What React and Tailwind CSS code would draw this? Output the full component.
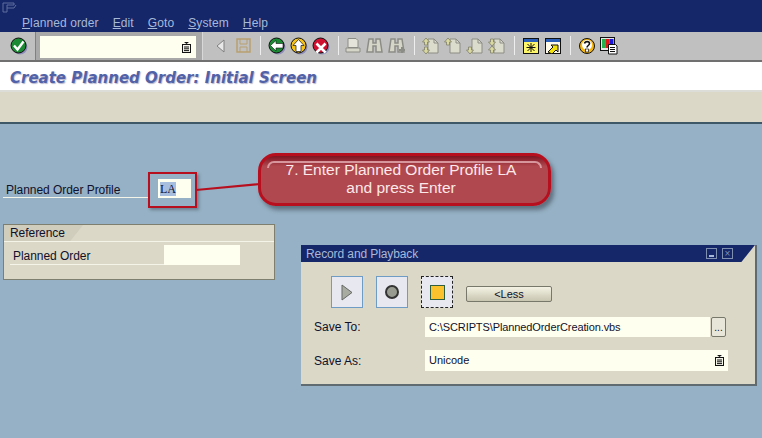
import React from 'react';

const MENU = [
  ['P', 'lanned order', 'ml-[22px]'],
  ['E', 'dit', 'ml-[14px]'],
  ['G', 'oto', 'ml-[14px]'],
  ['S', 'ystem', 'ml-[14px]'],
  ['H', 'elp', 'ml-[14px]'],
];

function Round({ fill, children }) {
  return (
    <svg width="18" height="18" viewBox="0 0 18 18">
      <circle cx="10" cy="10" r="7.5" fill="#8f8fb8" />
      <circle cx="8.5" cy="8.5" r="7.5" fill={fill} stroke="#101010" strokeWidth="1" />
      {children}
    </svg>
  );
}

const CheckIcon = () => (
  <Round fill="#1c8a35">
    <path d="M4 8.5l3.5 4L13.5 4.5" fill="none" stroke="#fff" strokeWidth="2.4" />
  </Round>
);
const BackIcon = () => (
  <Round fill="#1c8a35">
    <path d="M2.5 8.5L8 3.5v3h7v4.5H8v3z" fill="#fff" stroke="#111" strokeWidth="0.6" />
  </Round>
);
const UpIcon = () => (
  <Round fill="#f7c217">
    <path d="M8.5 2.5L14 8.5h-3v6H6v-6H3z" fill="#fff" stroke="#111" strokeWidth="0.7" />
  </Round>
);
const CancelIcon = () => (
  <Round fill="#cf1030">
    <path d="M4.5 6.5l9 9M13.5 6.5l-9 9" stroke="#fff" strokeWidth="2.6" />
  </Round>
);
const HelpIcon = () => (
  <svg width="18" height="18" viewBox="0 0 18 18">
    <circle cx="9" cy="9" r="7.5" fill="#f6b60f" stroke="#111" />
    <circle cx="9" cy="8" r="5" fill="#fff" />
    <path d="M6.5 6.5C7 4 11.5 4 11.5 6.5c0 2-2.5 2-2.5 4" fill="none" stroke="#111" strokeWidth="1.6" />
    <rect x="7.5" y="12" width="3" height="3" fill="#fff" stroke="#111" strokeWidth="0.7" />
  </svg>
);
const LayoutIcon = () => (
  <svg width="18" height="18" viewBox="0 0 18 18">
    <rect x="0.5" y="0.5" width="14" height="13" fill="#e8e8e8" stroke="#111" />
    <rect x="2" y="2" width="4" height="9" fill="#22b14c" />
    <rect x="6" y="2" width="3.5" height="9" fill="#e01818" />
    <rect x="9.5" y="2" width="4" height="9" fill="#1818d8" />
    <path d="M8.5 7.5h7l1.5 1.5v8h-8.5z" fill="#fff" stroke="#111" />
    <path d="M10 10.5h5M10 12.5h5M10 14.5h5" stroke="#111" />
  </svg>
);
const WinIcon = ({ children }) => (
  <svg width="16" height="16" viewBox="0 0 16 16">
    <rect x="0.5" y="0.5" width="15" height="15" fill="#fffbe8" stroke="#111" />
    <rect x="1" y="1" width="14" height="3" fill="#2c5fb8" />
    {children}
  </svg>
);
const NewSessionIcon = () => (
  <WinIcon>
    <rect x="1" y="4" width="14" height="11" fill="#fdf66a" />
    <path d="M8 5v9M3.5 9.5h9M4.5 6l7 7M11.5 6l-7 7" stroke="#111" />
  </WinIcon>
);
const ShortcutIcon = () => (
  <WinIcon>
    <path d="M3 14l5-5-2-2h7v7l-2-2-4 4z" fill="#f4e20e" stroke="#111" />
  </WinIcon>
);
const ValueHelp = () => (
  <svg width="9" height="11" viewBox="0 0 9 11">
    <path d="M2 0h5L4.5 2z" fill="#111" />
    <rect x="0.5" y="2.5" width="8" height="8" fill="#f4f4e8" stroke="#111" />
    <path d="M2 5h5M2 6.8h5M2 8.6h5" stroke="#111" />
  </svg>
);

// disabled toolbar glyphs share the same washed-out look
const Gray = ({ children }) => (
  <svg width="18" height="18" viewBox="0 0 18 18" fill="#d6d6c8" stroke="#8c8c86" strokeWidth="1">
    {children}
  </svg>
);
const PrintIcon = () => (
  <Gray>
    <path d="M4 1.5h8l2 2v7H4z" fill="#e4e4da" />
    <path d="M2 11h14v4H2z" />
  </Gray>
);
const FindIcon = ({ plus }) => (
  <Gray>
    <path d="M3 2h4v4h3V2h4l2 13h-6V9H7v6H1z" strokeWidth="1.5" />
    {plus && <path d="M11 13h6M14 10v6" stroke="#8c8c86" strokeWidth="2" />}
  </Gray>
);
const UP = (x, y) => `M${x} ${y}l3.5 4h-2v3h-3v-3h-2z`;
const DOWN = (x, y) => `M${x} ${y}l3.5 -4h-2v-3h-3v3h-2z`;
const PageIcon = ({ arrows }) => (
  <Gray>
    <path d="M6 2h6l4 4v10H6z" fill="#dcdccc" />
    <path d="M12 2v4h4" fill="none" />
    {arrows.map((d) => (
      <path key={d} d={d} fill="#d8d8a0" stroke="#80806a" strokeWidth="0.8" />
    ))}
  </Gray>
);

const Sep = ({ className }) => <div className={`w-px h-[19px] bg-[#eeeeee] shrink-0 ${className}`} />;
const Slot = ({ children }) => <div className="w-[22px] h-[20px] flex items-center justify-center shrink-0">{children}</div>;

function Toolbar() {
  return (
    <div className="h-[30px] flex bg-[#c0c0c0] border-b-[2px] border-[#707070]">
      <div className="w-[36px] flex items-center pl-[10px] border-r border-[#808080]">
        <CheckIcon />
      </div>
      <div className="w-[166px] bg-[#a8a8a8] pl-[4px] pr-[6px] py-[4px]">
        <div className="h-[22px] bg-[#fffff0] flex items-center justify-end pr-[5px]">
          <ValueHelp />
        </div>
      </div>
      <div className="flex items-center flex-1 border-l border-[#d8d8d8] pb-[1px]">
        <div className="ml-[7px]"><Slot>
          <svg width="10" height="14" viewBox="0 0 10 14"><path d="M8 1v12L1 7z" fill="#e8e8e8" stroke="#808080" /></svg>
        </Slot></div>
        <Slot>
          <svg width="15" height="15" viewBox="0 0 15 15" fill="none" stroke="#b8a070"><rect x="1" y="1" width="13" height="13" strokeWidth="1.5" /><path d="M4 1v5h7V1M4 14V9h7v5" /></svg>
        </Slot>
        <Sep className="ml-[6px] mr-[5px]" />
        <Slot><BackIcon /></Slot>
        <Slot><UpIcon /></Slot>
        <Slot><CancelIcon /></Slot>
        <Sep className="ml-[6px] mr-[3px]" />
        <Slot><PrintIcon /></Slot>
        <Slot><FindIcon /></Slot>
        <Slot><FindIcon plus /></Slot>
        <Sep className="ml-[6px] mr-[5px]" />
        <Slot><PageIcon arrows={[UP(4, 1), DOWN(4, 17)]} /></Slot>
        <Slot><PageIcon arrows={[UP(4, 1)]} /></Slot>
        <Slot><PageIcon arrows={[DOWN(4, 17)]} /></Slot>
        <Slot><PageIcon arrows={[DOWN(4, 9), UP(4, 9)]} /></Slot>
        <Sep className="ml-[6px] mr-[5px]" />
        <Slot><NewSessionIcon /></Slot>
        <Slot><ShortcutIcon /></Slot>
        <Sep className="ml-[6px] mr-[5px]" />
        <Slot><HelpIcon /></Slot>
        <Slot><LayoutIcon /></Slot>
      </div>
    </div>
  );
}

const ROUND_BTN = 'w-[32px] h-[32px] bg-[#e8e8f0] border border-[#6f9cc4] flex items-center justify-center';

function RecordWindow() {
  return (
    <div className="absolute left-[301px] top-[245px] w-[456px] h-[141px] bg-[#dbd8c8] border-r-2 border-b-2 border-[#5f6b70] font-['Liberation_Sans',sans-serif] text-[12px] tracking-normal text-[#10102a]">
      <div className="h-[17px] bg-[#152769] flex items-center justify-between [clip-path:polygon(0_0,100%_0,97%_100%,0_100%)] pl-[5px] pr-[22px]">
        <span className="text-[#a8b8d8] text-[12px] tracking-[-0.1px]">Record and Playback</span>
        <div className="flex gap-[5px]">
          <div className="w-[11px] h-[11px] border border-[#7f8fb0] flex items-end justify-center pb-[1px]"><div className="w-[5px] h-[2px] bg-[#a8b8d8]" /></div>
          <div className="w-[11px] h-[11px] border border-[#7f8fb0] flex items-center justify-center text-[#7f8fb0] text-[10px] leading-none">×</div>
        </div>
      </div>
      <div className="flex items-center mt-[14px] pl-[30px]">
        <div className={ROUND_BTN}>
          <svg width="12" height="17" viewBox="0 0 12 17"><path d="M1 1v15l10-7.5z" fill="#a8aca0" stroke="#666" /></svg>
        </div>
        <div className={`${ROUND_BTN} ml-[13px]`}>
          <div className="w-[14px] h-[14px] rounded-full bg-[#989c90] border-2 border-[#333]" />
        </div>
        <div className={`${ROUND_BTN} ml-[13px] border-dashed border-[#222]`}>
          <div className="w-[15px] h-[15px] bg-[#fcc22e] border border-[#2f5f3f]" />
        </div>
        <div className="ml-[13px] mt-[3px] w-[86px] h-[16px] rounded-[2px] bg-gradient-to-b from-[#f4f2e4] to-[#c8c6b0] border border-[#77776a] text-center leading-[14px] text-[11px]">&lt;Less</div>
      </div>
      <div className="flex items-center mt-[9px] pl-[13px]">
        <span className="w-[111px]">Save To:</span>
        <div className="w-[285px] h-[20px] bg-[#fffff0] pl-[4px] leading-[20px] text-[11px] tracking-[-0.1px]">C:\SCRIPTS\PlannedOrderCreation.vbs</div>
        <div className="ml-[1px] w-[15px] h-[20px] rounded-[2px] border border-[#77776a] bg-[#e8e6d8] text-center leading-[20px] text-[10px]">...</div>
      </div>
      <div className="flex items-center mt-[13px] pl-[13px]">
        <span className="w-[111px]">Save As:</span>
        <div className="w-[303px] h-[21px] bg-[#fffff0] px-[4px] flex items-center justify-between text-[11px]">
          Unicode
          <ValueHelp />
        </div>
      </div>
    </div>
  );
}

function Callout() {
  return (
    <div className="absolute left-[258px] top-[153px] w-[293px] h-[53px] rounded-[18px] bg-[linear-gradient(#7e1622,#b04850_22%)] border-[3px] border-[#b80f1e] shadow-[3px_4px_4px_rgba(40,50,60,0.5)] font-['Liberation_Sans',sans-serif] text-[#fce8e8] text-[15.5px] tracking-normal leading-[18px] text-center pt-[5px] pr-[7px]">
      <div className="absolute left-[6px] right-[6px] top-[5px] h-[7px] border-t-2 border-l-2 border-r-2 border-[#f0c0c4] rounded-t-[12px] opacity-70" />
      <div className="relative">7. Enter Planned Order Profile LA</div>
      <div className="relative">and press Enter</div>
    </div>
  );
}

export default function App() {
  return (
    <div className="relative w-[762px] h-[438px] overflow-hidden bg-[#96b1c5] font-['Liberation_Sans',sans-serif] text-[12px] tracking-[-0.05px] text-[#10102a]">
      <div className="h-[32px] bg-[#152769] relative text-[#a8b8d8] tracking-[0.1px]">
        <svg className="absolute left-[2px] top-[2px]" width="15" height="11" viewBox="0 0 15 11" fill="none" stroke="#5f6f9f">
          <path d="M1 1h11v2H5v3h7l2-3M1 1v9h4V6" />
        </svg>
        <div className="flex pt-[16px] leading-[15px]">
          {MENU.map(([first, rest, cls]) => (
            <span key={first} className={cls}><span className="underline">{first}</span>{rest}</span>
          ))}
        </div>
      </div>
      <Toolbar />
      <div className="h-[30px] bg-white border-b-[2px] border-[#dcdcd8] pl-[10px] pt-[2px] leading-[28px] font-['DejaVu_Sans',sans-serif] font-bold italic text-[15px] tracking-normal text-[#5262a8] [text-shadow:1px_1px_1px_#b8b8d0]">
        Create Planned Order: Initial Screen
      </div>
      <div className="h-[32px] bg-[#dbd8c8] border-b-[2px] border-[#3f5868]" />

      <div className="mt-[54px] ml-[3px] flex items-end">
        <div className="w-[147px] h-[20px] border-b border-[#f4f4e8] pl-[3px] pt-[2px] leading-[20px]">Planned Order Profile</div>
        <div className="ml-[8px] w-[33px] h-[19px] bg-[#fffff0] pl-[2px] pt-[3px] font-['Liberation_Serif',serif] text-[12px] tracking-normal leading-[14px]">
          <span className="bg-[#a8bede]">LA</span>
        </div>
      </div>

      <div className="mt-[26px] ml-[3px] w-[272px] h-[56px] border border-[#7f7f70] bg-[#dbd8c8] relative">
        <div className="h-[16px] w-[79px] bg-[#d0cdbc] [clip-path:polygon(0_0,100%_0,84%_100%,0_100%)] pl-[6px] leading-[16px]">Reference</div>
        <div className="h-px bg-[#f4f4e8]" />
        <div className="flex items-end mt-[3px] ml-[6px]">
          <div className="w-[154px] h-[20px] border-b border-[#f4f4e8] pl-[3px] pt-[1px] leading-[20px]">Planned Order</div>
          <div className="w-[76px] h-[20px] bg-[#fffff0]" />
        </div>
      </div>

      {/* red highlight + connector drawn on top of the form */}
      <div className="absolute left-[148px] top-[172px] w-[49px] h-[36px] border-[2px] border-[#b80f1e] shadow-[2px_2px_3px_rgba(40,50,60,0.4)]" />
      <svg className="absolute left-[196px] top-[180px]" width="64" height="14" viewBox="0 0 64 14">
        <path d="M0 10L64 4" stroke="#b80f1e" strokeWidth="2.2" />
      </svg>
      <Callout />
      <RecordWindow />
    </div>
  );
}
